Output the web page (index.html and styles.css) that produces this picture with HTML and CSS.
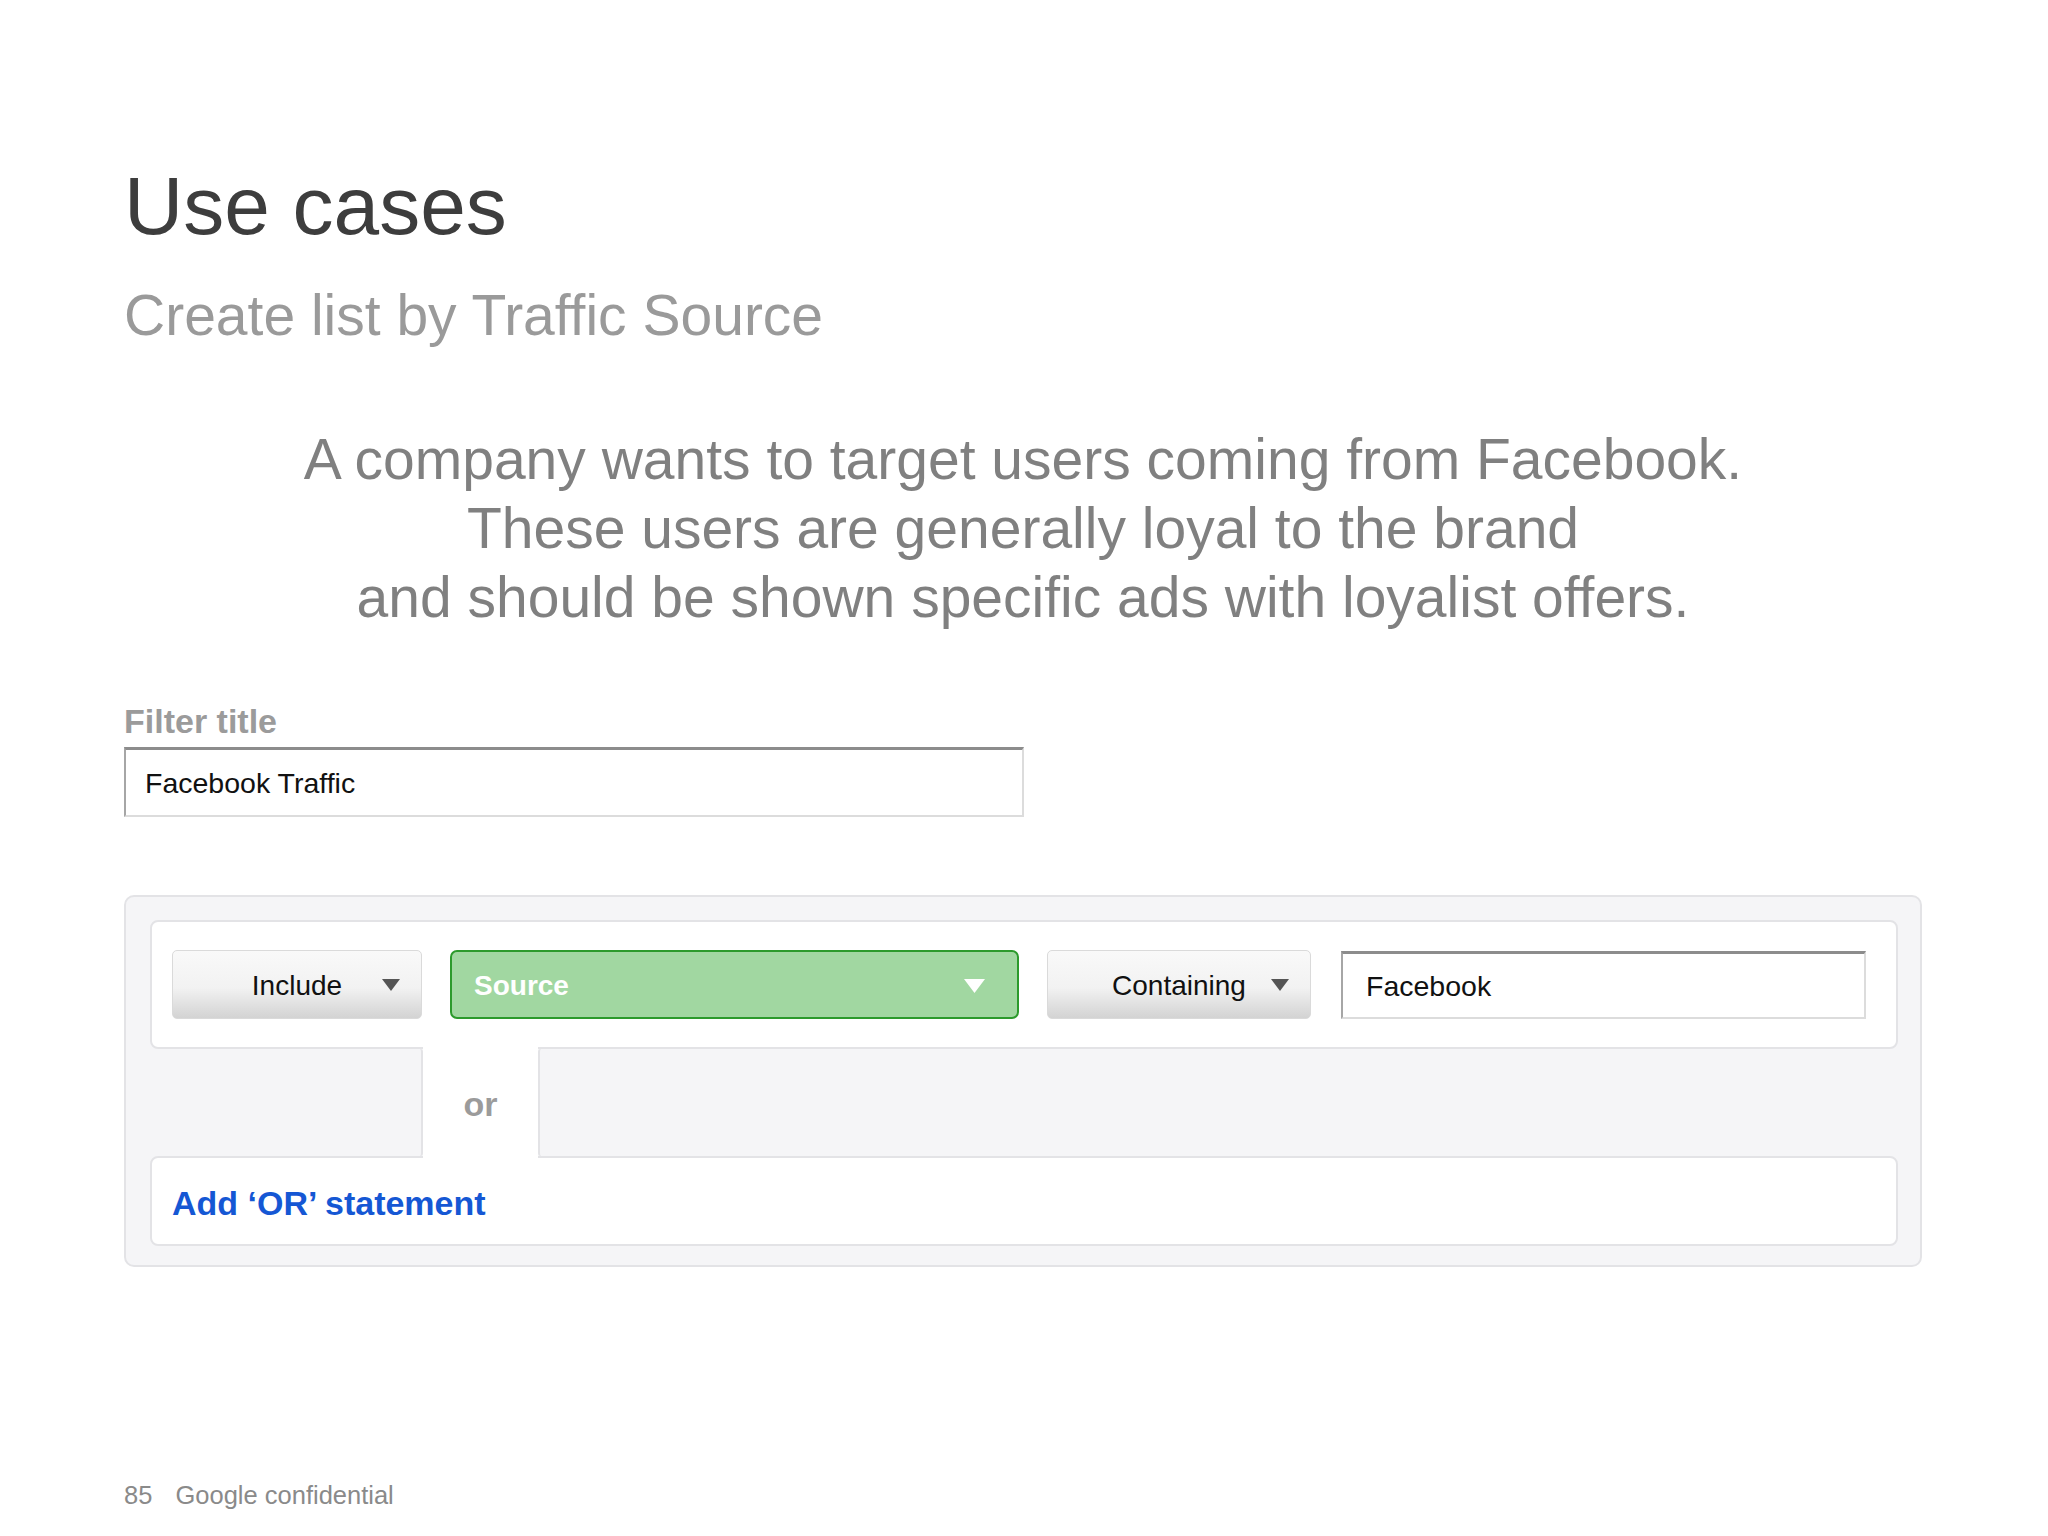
FILE: index.html
```html
<!DOCTYPE html>
<html lang="en">
<head>
    <meta charset="UTF-8">
    <meta name="viewport" content="width=device-width, initial-scale=1.0">
    <title>Use cases</title>
    <link rel="stylesheet" href="styles.css">
</head>
<body>
    <div class="slide">
        <h1 class="title">Use cases</h1>
        <h2 class="subtitle">Create list by Traffic Source</h2>

        <p class="story">
            A company wants to target users coming from Facebook.<br>
            These users are generally loyal to the brand<br>
            and should be shown specific ads with loyalist offers.
        </p>

        <label class="field-label" for="filter-title">Filter title</label>
        <input class="text-input filter-title" id="filter-title" type="text" value="Facebook Traffic">

        <div class="filter-panel">
            <div class="rule-row">
                <div class="dropdown include">
                    <span>Include</span>
                    <svg class="arrow" width="18" height="12" viewBox="0 0 18 12"><path d="M0 0H18L9 12Z" fill="#555"/></svg>
                </div>
                <div class="dropdown-green source">
                    <span>Source</span>
                    <svg width="21" height="14" viewBox="0 0 21 14"><path d="M0 0H21L10.5 14Z" fill="#fff"/></svg>
                </div>
                <div class="dropdown containing">
                    <span>Containing</span>
                    <svg class="arrow" width="18" height="12" viewBox="0 0 18 12"><path d="M0 0H18L9 12Z" fill="#555"/></svg>
                </div>
                <input class="text-input rule-value" type="text" value="Facebook">
            </div>

            <div class="or-row">
                <div class="or-side left"></div>
                <div class="or-label">or</div>
                <div class="or-side right"></div>
            </div>

            <div class="add-row">
                <a class="add-or" href="#">Add ‘OR’ statement</a>
            </div>
        </div>

        <div class="footer">
            <span class="page-num">85</span>
            <span>Google confidential</span>
        </div>
    </div>
</body>
</html>
```

FILE: styles.css
```css
:root {
    --panel-bg: #f5f5f7;
    --panel-border: #e3e3e6;
    --green-fill: #a1d7a1;
    --green-border: #2c9a2c;
    --link-blue: #1557d4;
}

html, body {
    margin: 0;
    padding: 0;
    background-color: #fff;
}

body {
    font-family: "Liberation Sans", Arial, sans-serif;
}

.slide {
    width: 2048px;
    height: 1536px;
    box-sizing: border-box;
    padding: 158px 126px 0 124px;
    display: flex;
    flex-direction: column;
}

.title {
    margin: 0;
    font-size: 82px;
    line-height: 96px;
    font-weight: normal;
    color: #3d3d3d;
}

.subtitle {
    margin: 27px 0 0;
    font-size: 57px;
    line-height: 68px;
    font-weight: normal;
    color: #9a9a9a;
}

.story {
    margin: 76px 0 0;
    font-size: 57px;
    line-height: 69px;
    text-align: center;
    color: #808080;
}

.field-label {
    margin-top: 69px;
    font-size: 34px;
    line-height: 40px;
    font-weight: bold;
    color: #9b9b9b;
}

.text-input {
    box-sizing: border-box;
    height: 70px;
    margin: 0;
    padding: 0 0 0 19px;
    font-family: inherit;
    font-size: 28.5px;
    color: #111;
    background-color: #fff;
    border-style: solid;
    border-width: 3px 2px 2px 2px;
    border-color: #8c8c8c #dcdcdc #dcdcdc #a6a6a6;
    border-radius: 0;
    outline: none;
}

.filter-title {
    margin-top: 6px;
    width: 900px;
    padding-top: 2px;
}

.filter-panel {
    margin-top: 78px;
    background-color: var(--panel-bg);
    border: 2px solid var(--panel-border);
    border-radius: 10px;
    padding: 23px 22px 19px 24px;
}

.rule-row {
    display: flex;
    align-items: center;
    gap: 28px;
    background-color: #fff;
    border: 2px solid var(--panel-border);
    border-radius: 8px;
    padding: 28px 30px 28px 20px;
}

.dropdown {
    position: relative;
    box-sizing: border-box;
    height: 69px;
    display: flex;
    align-items: center;
    justify-content: center;
    padding-top: 2px;
    font-size: 28px;
    color: #111;
    background: linear-gradient(to bottom, #f9f9f9 0%, #f2f2f2 55%, #d3d3d3 100%);
    border: 1px solid #dadada;
    border-radius: 5px;
}

.dropdown .arrow {
    position: absolute;
    right: 21px;
    top: 28px;
}

.include {
    width: 250px;
}

.containing {
    width: 264px;
}

.dropdown-green {
    box-sizing: border-box;
    width: 569px;
    height: 69px;
    display: flex;
    align-items: center;
    justify-content: space-between;
    padding: 2px 32px 0 22px;
    font-size: 28px;
    font-weight: bold;
    color: #fff;
    background-color: var(--green-fill);
    border: 2px solid var(--green-border);
    border-radius: 7px;
}

.rule-value {
    width: 525px;
    height: 68px;
    margin-left: 2px;
    padding-left: 23px;
    padding-top: 2px;
}

.or-row {
    display: flex;
    height: 107px;
}

.or-side {
    box-sizing: border-box;
    background-color: var(--panel-bg);
    border: 0 solid var(--panel-border);
}

.or-side.left {
    width: 273px;
    border-right-width: 2px;
    border-radius: 0 3px 3px 0;
}

.or-side.right {
    flex: 1;
    border-left-width: 2px;
    border-radius: 3px 0 0 3px;
}

.or-label {
    position: relative;
    width: 115px;
    margin: -2px 0;
    padding-top: 4px;
    display: flex;
    align-items: center;
    justify-content: center;
    background-color: #fff;
    font-size: 34px;
    font-weight: bold;
    color: #9b9b9b;
}

.add-row {
    height: 90px;
    box-sizing: border-box;
    display: flex;
    align-items: center;
    padding: 4px 0 0 20px;
    background-color: #fff;
    border: 2px solid var(--panel-border);
    border-radius: 8px;
}

.add-or {
    font-size: 34px;
    font-weight: bold;
    color: var(--link-blue);
    text-decoration: none;
}

.footer {
    margin-top: 213px;
    font-size: 25.5px;
    line-height: 30px;
    color: #8a8a8a;
}

.footer .page-num {
    margin-right: 16px;
}
```
